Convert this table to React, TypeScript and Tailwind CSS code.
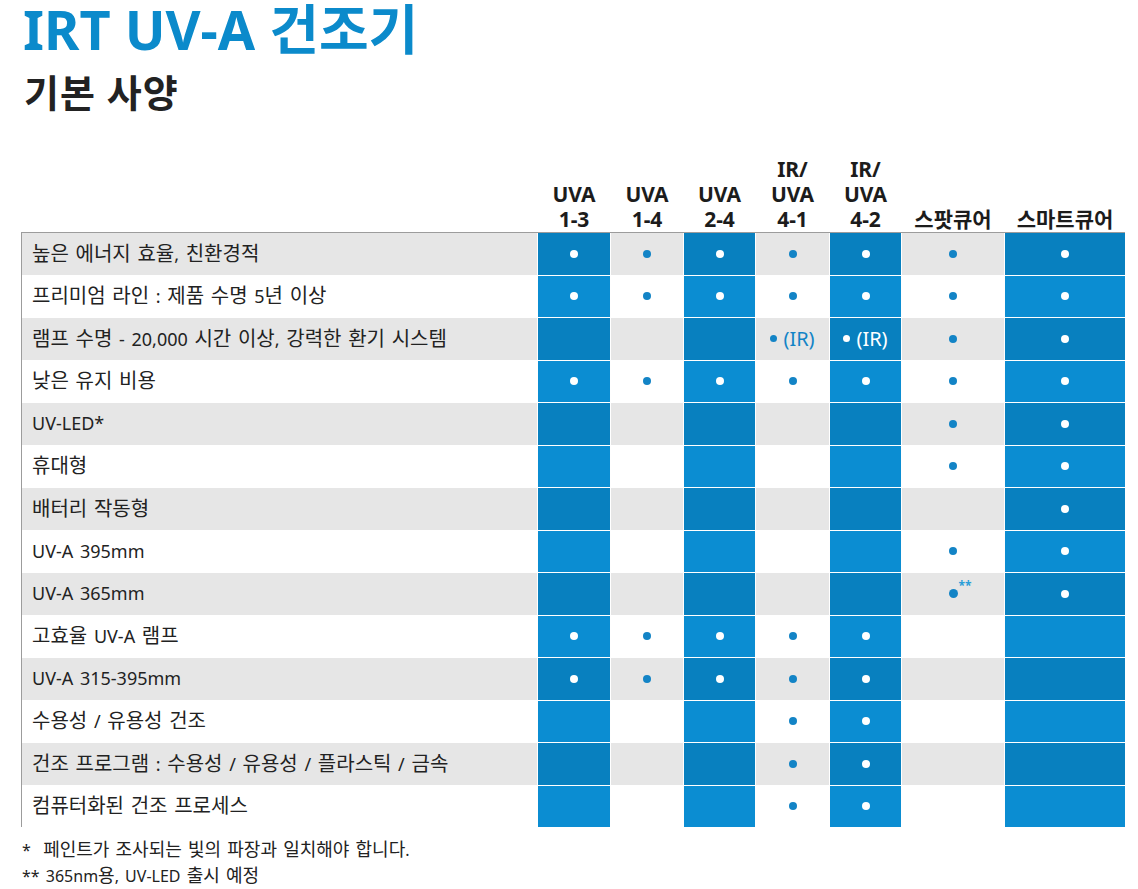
import React from 'react'

type Mark = '' | 'dot' | 'ir' | 'dotstar'

interface Row {
  label: string
  marks: Mark[]
}

const headers: string[][] = [
  ['UVA', '1-3'],
  ['UVA', '1-4'],
  ['UVA', '2-4'],
  ['IR/', 'UVA', '4-1'],
  ['IR/', 'UVA', '4-2'],
  ['스팟큐어'],
  ['스마트큐어'],
]

const rows: Row[] = [
  { label: '높은 에너지 효율, 친환경적', marks: ['dot', 'dot', 'dot', 'dot', 'dot', 'dot', 'dot'] },
  { label: '프리미엄 라인 : 제품 수명 5년 이상', marks: ['dot', 'dot', 'dot', 'dot', 'dot', 'dot', 'dot'] },
  { label: '램프 수명 - 20,000 시간 이상, 강력한 환기 시스템', marks: ['', '', '', 'ir', 'ir', 'dot', 'dot'] },
  { label: '낮은 유지 비용', marks: ['dot', 'dot', 'dot', 'dot', 'dot', 'dot', 'dot'] },
  { label: 'UV-LED*', marks: ['', '', '', '', '', 'dot', 'dot'] },
  { label: '휴대형', marks: ['', '', '', '', '', 'dot', 'dot'] },
  { label: '배터리 작동형', marks: ['', '', '', '', '', '', 'dot'] },
  { label: 'UV-A 395mm', marks: ['', '', '', '', '', 'dot', 'dot'] },
  { label: 'UV-A 365mm', marks: ['', '', '', '', '', 'dotstar', 'dot'] },
  { label: '고효율 UV-A 램프', marks: ['dot', 'dot', 'dot', 'dot', 'dot', '', ''] },
  { label: 'UV-A 315-395mm', marks: ['dot', 'dot', 'dot', 'dot', 'dot', '', ''] },
  { label: '수용성 / 유용성 건조', marks: ['', '', '', 'dot', 'dot', '', ''] },
  { label: '건조 프로그램 : 수용성 / 유용성 / 플라스틱 / 금속', marks: ['', '', '', 'dot', 'dot', '', ''] },
  { label: '컴퓨터화된 건조 프로세스', marks: ['', '', '', 'dot', 'dot', '', ''] },
]

const gridCols = 'grid grid-cols-[515px_72px_72px_71px_73px_71px_102px_120px] gap-x-px'

// Hangul runs are set a touch larger than the Latin text around them
function Mixed({ text, hangul }: { text: string; hangul: string }) {
  const parts = text.split(/([\uAC00-\uD7A3]+)/)
  return (
    <>
      {parts.map((p, i) =>
        /[\uAC00-\uD7A3]/.test(p) ? (
          <span key={i} className={hangul}>
            {p}
          </span>
        ) : (
          p
        ),
      )}
    </>
  )
}

function Cell({ mark, blue, striped }: { mark: Mark; blue: boolean; striped: boolean }) {
  const bg = blue ? (striped ? 'bg-[#0880bf]' : 'bg-[#0b8dd2]') : striped ? 'bg-[#e6e6e6]' : 'bg-white'
  const dot = blue ? 'bg-white' : 'bg-[#1384c6]'
  const text = blue ? 'text-white' : 'text-[#1384c6]'

  return (
    <div className={`flex items-center justify-center ${bg}`}>
      {mark === 'dot' && <span className={`size-2 rounded-full ${dot}`} />}
      {mark === 'ir' && (
        <span className={`flex items-center gap-[6px] text-[20px] ${text}`}>
          <span className={`size-[7px] rounded-full ${dot}`} />
          (IR)
        </span>
      )}
      {mark === 'dotstar' && (
        <span className="relative flex">
          <span className={`size-[9px] rounded-full ${dot}`} />
          <span className="absolute left-[10px] -top-[9px] text-[12px] font-bold leading-none text-[#2a9ed8]">**</span>
        </span>
      )}
    </div>
  )
}

export default function App() {
  return (
    <div className="min-h-screen bg-white pl-[21px] text-[#222]" style={{ fontFamily: '"Noto Sans", "Noto Sans CJK KR", sans-serif' }}>
      <div className="h-[150px]">
        <h1 className="pt-[2px] pl-[2px] text-[54px] font-bold leading-none text-[#0b8acb]">IRT UV-A 건조기</h1>
        <h2 className="mt-[17px] pl-[3px] text-[38px] font-bold leading-none tracking-[1px] text-[#222]">기본 사양</h2>
      </div>

      <div className={`${gridCols} h-[82px] pl-px`}>
        <div />
        {headers.map((lines, i) => (
          <div key={i} className="flex flex-col items-center justify-end text-[21px] font-bold leading-[25px] text-[#1c1c1c]">
            {lines.map((l) => (
              <span key={l}>{l}</span>
            ))}
          </div>
        ))}
      </div>

      <div className="w-[1104px] border-t border-l border-[#9c9c9c]">
        <div className={`${gridCols} auto-rows-[41.5px] gap-y-px`}>
          {rows.map((row, r) => {
            const striped = r % 2 === 0
            return (
              <React.Fragment key={r}>
                <div className={`flex items-center pl-[10px] text-[18px] [word-spacing:2px] text-[#222] ${striped ? 'bg-[#e6e6e6]' : 'bg-white'}`}>
                  <span>
                    <Mixed text={row.label} hangul="text-[20px]" />
                  </span>
                </div>
                {row.marks.map((m, c) => (
                  <Cell key={c} mark={m} blue={c % 2 === 0} striped={striped} />
                ))}
              </React.Fragment>
            )
          })}
        </div>
      </div>

      <div className="mt-[10px] pl-px text-[16px] leading-[25px] [word-spacing:2px] text-[#222]">
        <p>
          * &nbsp;<Mixed text="페인트가 조사되는 빛의 파장과 일치해야 합니다." hangul="text-[18px]" />
        </p>
        <p>
          <Mixed text="** 365nm용, UV-LED 출시 예정" hangul="text-[18px]" />
        </p>
      </div>
    </div>
  )
}
